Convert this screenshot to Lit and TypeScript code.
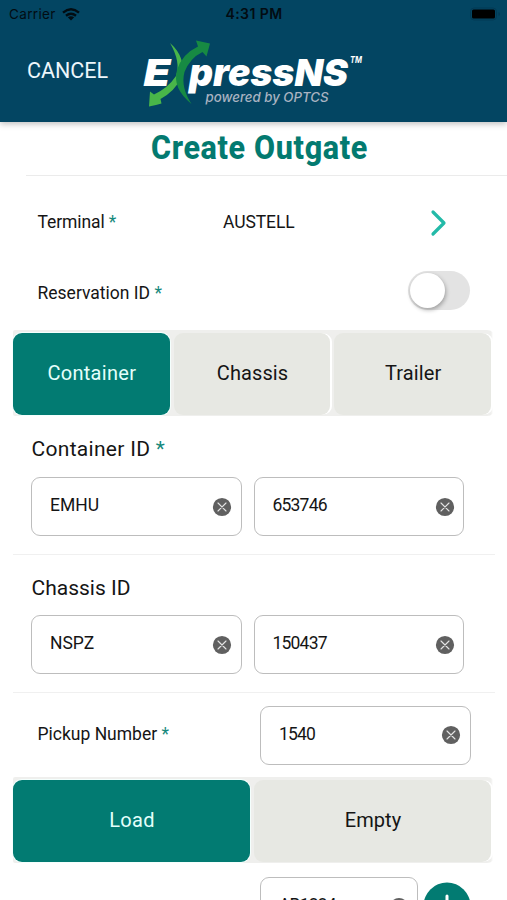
import { LitElement, html, css, svg } from "lit";
import { customElement, property } from "lit/decorators.js";

@customElement("clear-field")
class ClearField extends LitElement {
  @property() value = "";
  static styles = css`
    :host { display: flex; align-items: center; justify-content: space-between; box-sizing: border-box;
      width: 210.5px; height: 59px; border: 1.5px solid #bdbdbd; border-radius: 9px; padding: 0 8.5px 0 18px; background: #fff; }
    .value { font-size: 17.5px; line-height: 20px; color: #151515; letter-spacing: -0.8px; margin-bottom: 3px; }
    .alpha { letter-spacing: 0; }
    svg { width: 20px; height: 20px; display: block; }
  `;
  render() {
    return html`<span class="value ${/^[A-Z]+$/.test(this.value) ? "alpha" : ""}">${this.value}</span>
      <svg viewBox="0 0 20 20"><circle cx="10" cy="10" r="9.1" fill="#606060" /><path d="M6 6l8 8M14 6l-8 8" stroke="#e4e4e4" stroke-width="1.1" stroke-linecap="round" /></svg>`;
  }
}

@customElement("segment-bar")
class SegmentBar extends LitElement {
  @property({ type: Array }) items: string[] = [];
  static styles = css`
    :host { display: block; box-sizing: border-box; height: 86px; width: 482px; margin-left: 13px; padding: 3px 4px 1px 0;
      background: linear-gradient(90deg, #efefed 478px, #fff 480px); border-radius: 2px 8px 8px 2px; }
    .bar { display: flex; gap: 4px; height: 82px; }
    .seg { flex: 1; display: flex; align-items: center; justify-content: center; border-radius: 9px; background: #e7e8e3;
      color: #151515; font-size: 20px; letter-spacing: 0.1px; padding: 0 0 3px 1px; box-sizing: border-box;
      box-shadow: 2.5px 0 0 -0.5px #fff; }
    .on { background: #027b72; color: #e4fffb; letter-spacing: 0.3px; box-shadow: 0 0 0 1px #f4fffd; }
  `;
  render() {
    return html`<div class="bar">${this.items.map((t, i) => html`<div class="seg ${i === 0 ? "on" : ""}">${t}</div>`)}</div>`;
  }
}

@customElement("express-logo")
class ExpressLogo extends LitElement {
  static styles = css`
    :host { display: block; width: 224px; height: 72px; }
    svg { display: block; }
    .word { font: italic 900 37.5px Inter, "Open Sans", sans-serif; fill: #fff; }
    .sub { font: italic 500 13px Inter, sans-serif; fill: #a9b3c1; }
    .tm { font: italic 700 9px Inter, sans-serif; fill: #fff; }
  `;
  render() {
    return html`<svg width="224" height="72" viewBox="142 38 224 72">${svg`
      <text class="word" x="143.500" y="86" textLength="27" lengthAdjust="spacingAndGlyphs">E</text>
      <text class="word" x="189" y="86" textLength="159" lengthAdjust="spacingAndGlyphs">pressNS</text>
      <path d="M170 43Q187 58 181 78Q175 91 160.500 99L161.500 103.500L156 105L149 106.500L150 91.500L154 94.500Q168 88 176 76Q181 62 170 43Z" fill="#49b649" />
      <path d="M191.500 104Q172 88 177 70Q182 54 198 46.500L196 40.500L210 43.500L206.500 56.500L202.500 52Q190 58 184.500 72Q180.500 87 191.500 104Z" fill="#178a43" />
      <text class="sub" x="205.500" y="102" textLength="123" lengthAdjust="spacingAndGlyphs">powered by OPTCS</text>
      <text class="tm" x="350" y="62.500" textLength="12" lengthAdjust="spacingAndGlyphs">TM</text>`}</svg>`;
  }
}

@customElement("app-root")
class AppRoot extends LitElement {
  static styles = css`
    :host { display: block; height: 900px; overflow: hidden; background: #fff; font-family: Roboto, "Open Sans", sans-serif; color: #151515; }
    header { height: 122px; background: #034562; box-shadow: 0 2px 6px rgba(0,0,0,.25); box-sizing: border-box; position: relative; }
    .status { height: 28px; display: grid; grid-template-columns: 1fr auto 1fr; align-items: center; padding: 0 6px 0 9px;
      font: 500 13.5px/28px Inter, sans-serif; color: #020c12; box-sizing: border-box; }
    .left { display: flex; align-items: center; gap: 6px; font-weight: 400; letter-spacing: 0.35px; }
    .clock { font-weight: 600; font-size: 14px; letter-spacing: 0.45px; margin-right: 2px; }
    .battery { justify-self: end; display: block; }
    .nav { display: flex; padding-top: 10px; }
    .cancel { width: 115px; padding: 20px 0 0 27px; font-size: 21.5px; line-height: 26px; color: #edf6fb; letter-spacing: 0; }
    h1 { height: 53px; margin: 0 0 0 26px; border-bottom: 1px solid #ebebeb; font-size: 33px; line-height: 51px; color: #037a70; font-weight: 800; }
    h1 span { display: block; width: 467px; text-align: center; letter-spacing: 0.7px; transform: scaleX(.925); }
    .row { display: grid; grid-template-columns: 185.5px 1fr auto; align-items: center; padding: 0 37px 0 37.5px; font-size: 17.5px; letter-spacing: -0.1px; }
    .terminal { height: 92px; padding-right: 59px; }
    .terminal svg { margin-top: 2px; }
    .reservation { height: 62px; padding-bottom: 13px; box-sizing: border-box; align-content: start; }
    .reservation label { padding-top: 7px; letter-spacing: 0; }
    .switch { width: 62px; height: 39px; margin-top: 3px; border-radius: 20px; background: #e3e3e3; box-sizing: border-box; padding: 2px; }
    .knob { width: 35px; height: 35px; border-radius: 50%; background: #fff; box-shadow: 1px 2px 4px rgba(0,0,0,.3); }
    i { font-style: normal; color: #16897c; }
    .group { height: 138px; box-sizing: border-box; margin: 0 12px 0 13px; padding: 20px 0 0 18px; border-bottom: 1px solid #f0f0f0; }
    .first { height: 139px; }
    .label { font-size: 21px; line-height: 26px; height: 40px; padding-left: 0.5px; letter-spacing: 0; }
    .first .label { height: 41px; letter-spacing: 0.3px; }
    .pair { display: flex; gap: 12px; }
    .pickup { display: grid; grid-template-columns: 222.5px auto; justify-content: start; align-items: center; height: 84px; padding-left: 37.5px; box-sizing: border-box; font-size: 17.5px; }
    .pickup label { padding-bottom: 2px; }
    .last { display: flex; gap: 5px; padding: 14px 0 0 260px; }
    .last clear-field { width: 158px; }
    .plus { width: 48px; height: 48px; margin-top: 5px; }
  `;
  render() {
    return html`
      <header>
        <div class="status">
          <div class="left">Carrier <svg width="18" height="13" viewBox="0 0 18 13" fill="none" stroke="#020c12" stroke-width="2.400"><path d="M1 4.700Q9-2 17 4.700M4 7.800Q9 3.700 14 7.800" /><path d="M9 12.500L5.800 9.300Q9 7 12.200 9.300Z" fill="#020c12" stroke="none" /></svg></div>
          <div class="clock">4:31 PM</div>
          <svg class="battery" width="31" height="14" viewBox="0 0 31 14"><rect x=".5" y="1" width="26" height="12" rx="3.500" fill="none" stroke="#033a55" /><rect x="2" y="2.500" width="23" height="9" rx="1.500" fill="#000" /><path d="M28.500 5v4q1.500-.5 1.500-2t-1.500-2" fill="#033a55" /></svg>
        </div>
        <div class="nav"><div class="cancel">CANCEL</div><express-logo></express-logo></div>
      </header>
      <h1><span>Create Outgate</span></h1>
      <div class="row terminal"><label>Terminal <i>*</i></label><span>AUSTELL</span>
        <svg width="20" height="28" viewBox="0 0 20 28"><path d="M5 3l11 11L5 25" fill="none" stroke="#23baa8" stroke-width="3.200" stroke-linecap="round" stroke-linejoin="round" /></svg></div>
      <div class="row reservation"><label>Reservation ID <i>*</i></label><span></span><div class="switch"><div class="knob"></div></div></div>
      <segment-bar .items=${["Container", "Chassis", "Trailer"]}></segment-bar>
      <div class="group first"><div class="label">Container ID <i>*</i></div><div class="pair"><clear-field value="EMHU"></clear-field><clear-field value="653746"></clear-field></div></div>
      <div class="group"><div class="label">Chassis ID</div><div class="pair"><clear-field value="NSPZ"></clear-field><clear-field value="150437"></clear-field></div></div>
      <div class="pickup"><label>Pickup Number <i>*</i></label><clear-field value="1540"></clear-field></div>
      <segment-bar .items=${["Load", "Empty"]}></segment-bar>
      <div class="last"><clear-field value="AB1234"></clear-field><svg class="plus" viewBox="0 0 48 48"><circle cx="24" cy="24" r="23.500" fill="#027b72" /><path d="M24 14v20M14 24h20" stroke="#fff" stroke-width="3" stroke-linecap="round" /></svg></div>
    `;
  }
}
